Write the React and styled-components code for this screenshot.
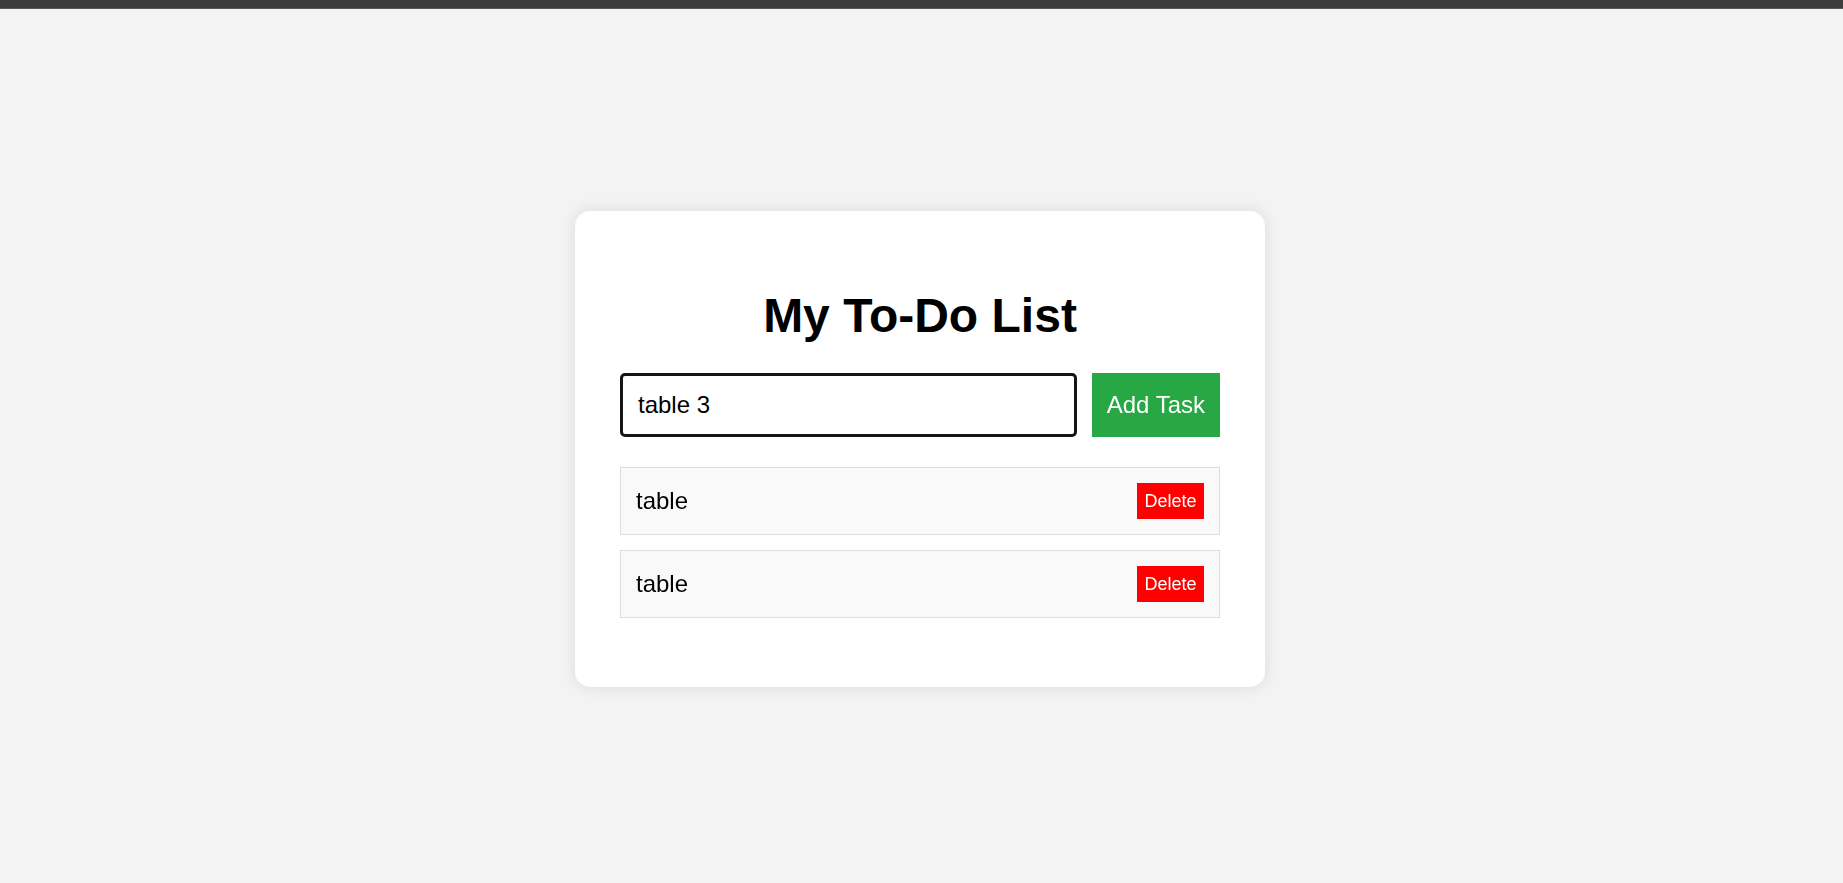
import React, { useEffect, useRef } from 'react';
import styled, { createGlobalStyle } from 'styled-components';

const GlobalStyle = createGlobalStyle`
  * {
    box-sizing: border-box;
  }
  body {
    margin: 0;
    background: #f3f3f3;
    font-family: 'Liberation Sans', Arial, sans-serif;
  }
`;

const TopBar = styled.div`
  height: 9px;
  background: #3d3d3d;
  border-bottom: 1px solid #5a5a5a;
`;

const Page = styled.div`
  height: 874px;
  padding: 6px 3px 0 0;
  display: flex;
  align-items: center;
  justify-content: center;
`;

const Card = styled.div`
  width: 690px;
  background: #fff;
  padding: 45px;
  border-radius: 15px;
  box-shadow: 0 0 15px rgba(0, 0, 0, 0.1);
`;

const Title = styled.h1`
  margin: 32px 0 30px;
  text-align: center;
  font-size: 48px;
  font-weight: 700;
  color: #000;
`;

const InputRow = styled.div`
  display: flex;
  gap: 15px;
`;

const TaskInput = styled.input`
  flex: 1;
  padding: 15px;
  font-family: inherit;
  font-size: 24px;
  color: #000;
  border: 3px solid #151515;
  border-radius: 5px;
  outline: none;
  caret-color: #000;
`;

const AddButton = styled.button`
  padding: 15px;
  border: none;
  background: #28a745;
  color: #fff;
  font-family: inherit;
  font-size: 24px;
  cursor: pointer;
`;

const List = styled.ul`
  list-style: none;
  margin: 30px 0 24px;
  padding: 0;
`;

const Item = styled.li`
  display: flex;
  justify-content: space-between;
  align-items: center;
  padding: 15px;
  margin-bottom: 15px;
  background: #f9f9f9;
  border: 1.5px solid #dddddd;
  font-size: 24px;
  color: #000;
`;

const DeleteButton = styled.button`
  padding: 7.5px;
  border: none;
  background: #ff0000;
  color: #fff;
  font-family: inherit;
  font-size: 18px;
  cursor: pointer;
`;

export default function App() {
  const inputRef = useRef(null);
  const tasks = ['table', 'table'];

  useEffect(() => {
    const el = inputRef.current;
    if (el) {
      el.focus();
      el.setSelectionRange(el.value.length, el.value.length);
    }
  }, []);

  return (
    <>
      <GlobalStyle />
      <TopBar />
      <Page>
        <Card>
          <Title>My To-Do List</Title>
          <InputRow>
            <TaskInput ref={inputRef} type="text" defaultValue="table 3" />
            <AddButton>Add Task</AddButton>
          </InputRow>
          <List>
            {tasks.map((task, i) => (
              <Item key={i}>
                <span>{task}</span>
                <DeleteButton>Delete</DeleteButton>
              </Item>
            ))}
          </List>
        </Card>
      </Page>
    </>
  );
}
